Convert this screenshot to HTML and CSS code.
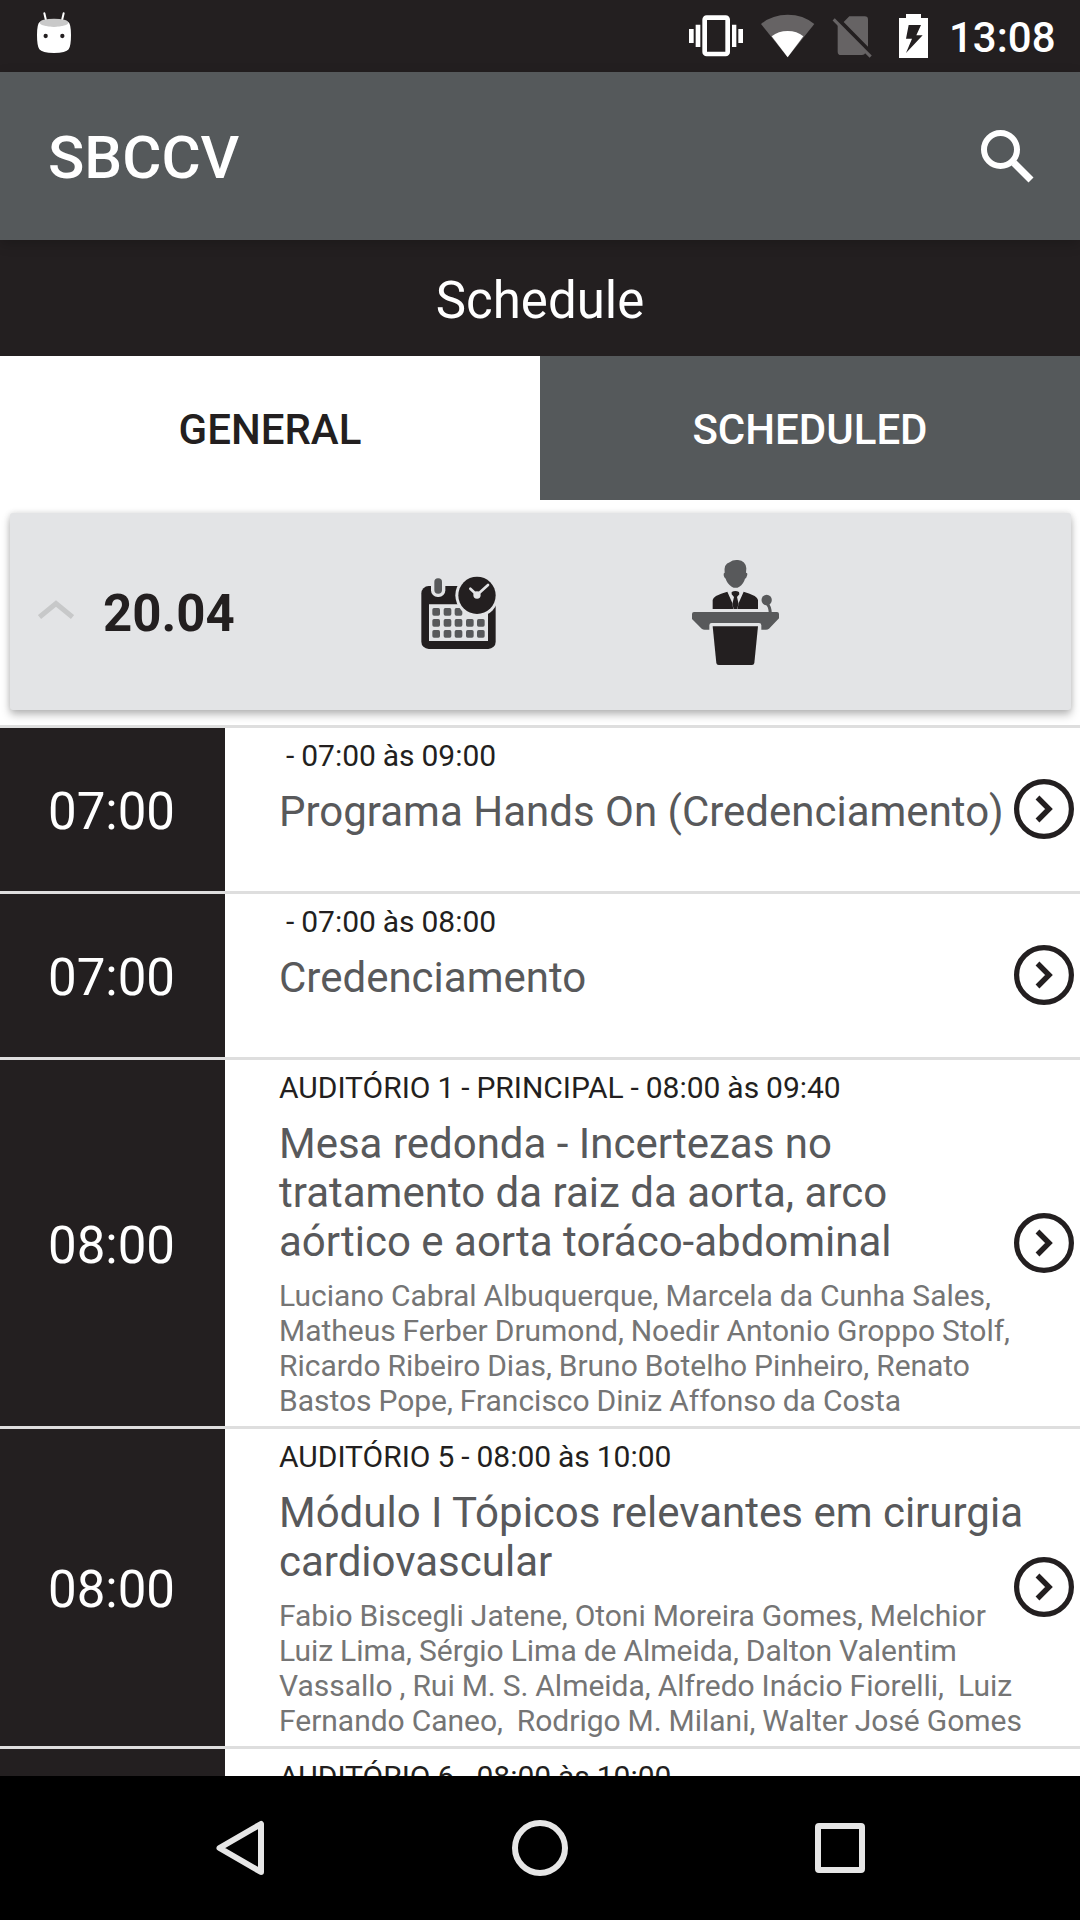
FILE: index.html
```html
<!doctype html>
<html lang="pt-BR">
    <head>
        <meta charset="utf-8">
        <title>SBCCV - Schedule</title>
        <link rel="stylesheet" href="styles.css">
    </head>
    <body>
        <svg class="symbols">
            <symbol id="go" viewBox="0 0 60 60">
                <circle cx="30" cy="30" r="27.4" fill="none" stroke="#231f20" stroke-width="5.2"/>
                <path d="M23.5 18.5L35 30L23.5 41.5" fill="none" stroke="#231f20" stroke-width="5.4"/>
            </symbol>
        </svg>

        <div class="status-bar">
            <svg class="droid" width="36" height="44" viewBox="108 36 108 132">
                <path d="M133 40L139 65M191 40L185 65" stroke="#fff" stroke-width="6" stroke-linecap="round"/>
                <path d="M119 66Q162 92 205 66Q213 72 213 105Q213 138 206 148Q198 159 162 159Q126 159 118 148Q111 138 111 105Q111 72 119 66Z" fill="#fff"/>
                <ellipse cx="162" cy="68" rx="43" ry="12" fill="#c9c9c9"/>
                <circle cx="137" cy="108" r="6.5" fill="#231f20"/>
                <circle cx="187" cy="108" r="6.5" fill="#231f20"/>
            </svg>
            <div class="status-icons">
                <svg width="56" height="48" viewBox="84 36 168 144">
                    <rect x="134" y="53" width="69" height="109" rx="6" fill="none" stroke="#fff" stroke-width="14"/>
                    <path d="M87 87h14v42h-14zM107 74h14v67h-14zM216 74h13v67h-13zM235 87h14v42h-14z" fill="#fff"/>
                </svg>
                <svg class="wifi" width="56" height="48" viewBox="300 36 168 144">
                    <path d="M303 72Q336 44 383 44Q430 44 463 72L383 172Z" fill="#666364"/>
                    <path d="M335 109Q355 93 383 93Q411 93 430 109L383 172Z" fill="#fff"/>
                </svg>
                <svg class="sim" width="40" height="48" viewBox="516 36 120 144">
                    <path d="M551 66L568 49H614Q624 49 624 59V140ZM533 74L617 158Q613 165 606 165H543Q533 165 533 155Z" fill="#666364"/>
                    <path d="M521 58L632 170" stroke="#666364" stroke-width="9"/>
                </svg>
                <svg class="battery" width="31" height="48" viewBox="714 36 93 144">
                    <path fill-rule="evenodd" d="M738 42H783V54H804V174H717V54H738ZM746 75L738 116H756L738 159L788 106H769L783 75Z" fill="#fff"/>
                </svg>
                <span class="clock">13:08</span>
            </div>
        </div>

        <header class="toolbar">
            <h1>SBCCV</h1>
            <svg width="54" height="54" viewBox="0 0 54 54" fill="none" stroke="#fff">
                <circle cx="20.5" cy="20.5" r="16.5" stroke-width="6"/>
                <path d="M34 34L51 51" stroke-width="7"/>
                <path d="M31 31L36 36" stroke-width="4"/>
            </svg>
        </header>

        <h2 class="page-title">Schedule</h2>

        <nav class="tabs">
            <a class="tab active">GENERAL</a>
            <a class="tab">SCHEDULED</a>
        </nav>

        <div class="day-card">
            <svg class="collapse" width="36" height="20" viewBox="0 0 36 20">
                <path d="M1.5 17L18 3.5L34.5 17" fill="none" stroke="#c7c8c9" stroke-width="5"/>
            </svg>
            <span class="date">20.04</span>
            <svg class="calendar" width="78" height="75" viewBox="60 105 234 225">
                <rect x="64" y="138" width="223" height="189" rx="22" fill="#231f20"/>
                <path d="M87 193H264V303H87Z" fill="#e3e4e6"/>
                <rect x="93" y="105" width="43" height="66" rx="20" fill="#e3e4e6"/>
                <rect x="103" y="115" width="23" height="46" rx="11" fill="#58595b"/>
                <g fill="#58595b">
                    <rect x="97" y="204" width="23" height="23" rx="5"/>
                    <rect x="131" y="204" width="23" height="23" rx="5"/>
                    <rect x="164" y="204" width="23" height="23" rx="5"/>
                    <rect x="97" y="237" width="23" height="23" rx="5"/>
                    <rect x="131" y="237" width="23" height="23" rx="5"/>
                    <rect x="164" y="237" width="23" height="23" rx="5"/>
                    <rect x="198" y="237" width="23" height="23" rx="5"/>
                    <rect x="231" y="237" width="23" height="23" rx="5"/>
                    <rect x="97" y="270" width="23" height="23" rx="5"/>
                    <rect x="131" y="270" width="23" height="23" rx="5"/>
                    <rect x="164" y="270" width="23" height="23" rx="5"/>
                    <rect x="198" y="270" width="23" height="23" rx="5"/>
                    <rect x="231" y="270" width="23" height="23" rx="5"/>
                </g>
                <circle cx="231" cy="166" r="65" fill="#e3e4e6"/>
                <circle cx="231" cy="166" r="56" fill="#231f20"/>
                <path d="M211 146L231 165L264 135" fill="none" stroke="#e3e4e6" stroke-width="8" stroke-linecap="round"/>
                <circle cx="231" cy="165" r="11" fill="#e3e4e6"/>
            </svg>
            <svg class="speaker" width="91" height="108" viewBox="870 54 273 324">
                <path d="M974 98Q971 72 989 67Q999 58 1014 60Q1037 62 1039 85L1038 98Q1044 98 1041 107Q1039 115 1035 116Q1031 131 1018 140Q1007 147 995 140Q981 130 977 116Q972 113 971 106Q970 98 974 98Z" fill="#58595b"/>
                <path d="M938 207V180Q939 174 948 168Q962 160 982 155L996 187L1000 207ZM1074 207V180Q1073 174 1064 168Q1050 160 1031 155L1017 187L1012 207Z" fill="#231f20"/>
                <path d="M995 156Q1006 150 1017 156L1018 163L1011 171L1016 192L1011 207H1001L997 192L1002 171L995 163Z" fill="#231f20"/>
                <circle cx="1100" cy="180" r="15.5" fill="#58595b"/>
                <path d="M1100 190Q1110 198 1111 220" fill="none" stroke="#58595b" stroke-width="9"/>
                <path d="M882 216H1131Q1137 216 1137 222V235L1107 266Q1103 269 1098 269H1084V256Q1084 249 1077 249H935Q928 249 928 256V269H914Q909 269 905 266L876 237V222Q876 216 882 216Z" fill="#58595b"/>
                <path d="M938 259H1074L1063 369Q1062 375 1056 375H956Q950 375 949 369Z" fill="#231f20"/>
            </svg>
        </div>

        <main class="schedule">
            <div class="event">
                <div class="time">07:00</div>
                <div class="info">
                    <p class="place">&nbsp;- 07:00 às 09:00</p>
                    <p class="title">Programa Hands On (Credenciamento)</p>
                </div>
                <svg class="go"><use href="#go"/></svg>
            </div>
            <div class="event">
                <div class="time">07:00</div>
                <div class="info">
                    <p class="place">&nbsp;- 07:00 às 08:00</p>
                    <p class="title">Credenciamento</p>
                </div>
                <svg class="go"><use href="#go"/></svg>
            </div>
            <div class="event">
                <div class="time">08:00</div>
                <div class="info">
                    <p class="place">AUDITÓRIO 1 - PRINCIPAL - 08:00 às 09:40</p>
                    <p class="title">Mesa redonda - Incertezas no<br>tratamento da raiz da aorta, arco<br>aórtico e aorta toráco-abdominal</p>
                    <p class="people">Luciano Cabral Albuquerque, Marcela da Cunha Sales,<br>Matheus Ferber Drumond, Noedir Antonio Groppo Stolf,<br>Ricardo Ribeiro Dias, Bruno Botelho Pinheiro, Renato<br>Bastos Pope, Francisco Diniz Affonso da Costa</p>
                </div>
                <svg class="go"><use href="#go"/></svg>
            </div>
            <div class="event">
                <div class="time">08:00</div>
                <div class="info">
                    <p class="place">AUDITÓRIO 5 - 08:00 às 10:00</p>
                    <p class="title">Módulo I Tópicos relevantes em cirurgia<br>cardiovascular</p>
                    <p class="people">Fabio Biscegli Jatene, Otoni Moreira Gomes, Melchior<br>Luiz Lima, Sérgio Lima de Almeida, Dalton Valentim<br>Vassallo , Rui M. S. Almeida, Alfredo Inácio Fiorelli, &nbsp;Luiz<br>Fernando Caneo, &nbsp;Rodrigo M. Milani, Walter José Gomes</p>
                </div>
                <svg class="go"><use href="#go"/></svg>
            </div>
            <div class="event">
                <div class="time"></div>
                <div class="info">
                    <p class="place">AUDITÓRIO 6 - 08:00 às 10:00</p>
                </div>
            </div>
        </main>

        <footer class="nav-bar">
            <svg width="60" height="60" viewBox="0 0 60 60">
                <path d="M51 6V54L9.5 30Z" fill="none" stroke="#e6e6e6" stroke-width="6" stroke-linejoin="round"/>
            </svg>
            <svg width="60" height="60" viewBox="0 0 60 60">
                <circle cx="30" cy="30" r="25" fill="none" stroke="#e6e6e6" stroke-width="6"/>
            </svg>
            <svg width="60" height="60" viewBox="0 0 60 60">
                <rect x="8" y="8" width="44" height="44" rx="1" fill="none" stroke="#e6e6e6" stroke-width="6"/>
            </svg>
        </footer>
    </body>
</html>
```
FILE: styles.css
```css
:root {
  --dark: #231f20;
  --gray: #55595b;
  --line: #dedede;
  --card: #e3e4e6;
}

* {
  padding: 0;
  margin: 0;
  box-sizing: border-box;
}

body {
  display: flex;
  flex-direction: column;
  width: 1080px;
  height: 1920px;
  overflow: hidden;
  font-family: Roboto, sans-serif;
  background: #fff;
  color: var(--dark);
}

svg {
  display: block;
  flex: none;
}

.symbols {
  display: none;
}

.status-bar {
  display: flex;
  align-items: center;
  justify-content: space-between;
  height: 72px;
  flex: none;
  padding: 0 25px 0 36px;
  background: var(--dark);
}

.droid {
  margin-bottom: 4px;
}

.status-icons {
  display: flex;
  align-items: center;
}

.wifi,
.sim {
  margin-left: 16px;
}

.battery {
  margin-left: 26px;
}

.clock {
  width: 106px;
  margin-left: 20px;
  padding-top: 4px;
  font-size: 42px;
  font-weight: 500;
  line-height: 68px;
  white-space: nowrap;
  color: #fff;
}

.toolbar {
  position: relative;
  display: flex;
  align-items: center;
  justify-content: space-between;
  height: 168px;
  flex: none;
  padding: 0 46px 0 48px;
  background: var(--gray);
  color: #fff;
  box-shadow: 0 4px 12px rgba(0, 0, 0, 0.2);
}

.toolbar h1 {
  padding-top: 4px;
  font-size: 60px;
  font-weight: 500;
  line-height: 70px;
}

.page-title {
  height: 116px;
  flex: none;
  font-size: 51px;
  font-weight: 400;
  line-height: 122px;
  text-align: center;
  background: var(--dark);
  color: #fff;
}

.tabs {
  display: flex;
  height: 144px;
  flex: none;
}

.tab {
  flex: 1;
  font-size: 42px;
  font-weight: 500;
  line-height: 148px;
  text-align: center;
  background: var(--gray);
  color: #fff;
}

.tab.active {
  background: #fff;
  color: var(--dark);
}

.day-card {
  display: flex;
  align-items: center;
  height: 197px;
  flex: none;
  margin: 13px 9px 15px 10px;
  background: var(--card);
  border-radius: 3px;
  box-shadow: 0 5px 8px rgba(0, 0, 0, 0.25), 0 0 6px rgba(0, 0, 0, 0.12);
}

.collapse {
  margin: 0 29px 3px 28px;
}

.date {
  width: 132px;
  padding-top: 5px;
  font-size: 51px;
  font-weight: 700;
  line-height: 60px;
}

.calendar {
  margin: 2px 0 0 185px;
}

.speaker {
  margin-left: 192px;
}

.schedule {
  flex: 1;
  overflow: hidden;
}

.event {
  display: flex;
  min-height: 166px;
  border-top: 3px solid var(--line);
}

.time {
  display: flex;
  align-items: center;
  justify-content: center;
  width: 225px;
  flex: none;
  padding: 4px 2px 0 0;
  font-size: 51px;
  background: var(--dark);
  color: #fff;
}

.info {
  width: 735px;
  flex: none;
  margin-left: 54px;
  padding: 10px 0 8px;
  white-space: nowrap;
}

.place,
.people {
  font-size: 30px;
  letter-spacing: -0.02px;
  word-spacing: -0.45px;
}

.place {
  line-height: 36px;
}

.title {
  margin-top: 13px;
  font-size: 42px;
  line-height: 49px;
  color: #58595b;
}

.people {
  margin-top: 12px;
  line-height: 35px;
  color: #757575;
}

.go {
  position: relative;
  width: 60px;
  height: 60px;
  align-self: center;
  margin-bottom: 1px;
}

.nav-bar {
  display: flex;
  justify-content: center;
  align-items: center;
  gap: 240px;
  height: 144px;
  flex: none;
  background: #000;
}
```
